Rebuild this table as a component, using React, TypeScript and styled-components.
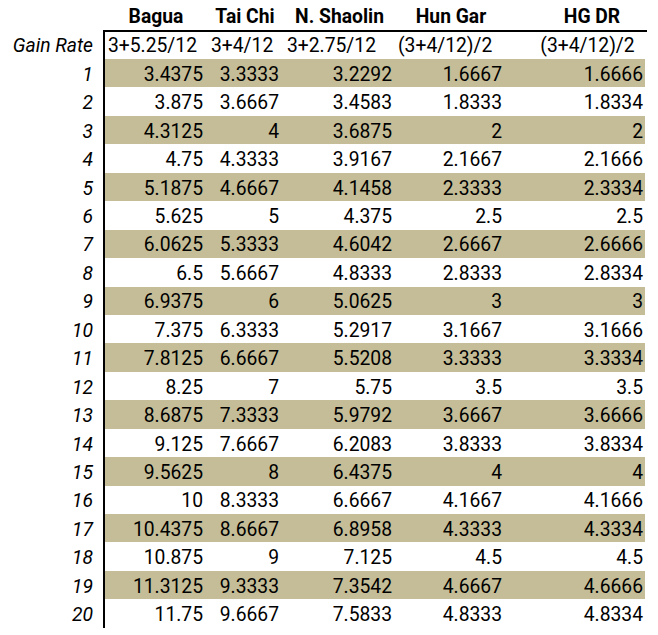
import React from 'react';
import styled, { createGlobalStyle } from 'styled-components';

const GlobalStyle = createGlobalStyle`
  *, *::before, *::after { box-sizing: border-box; }
  html, body { margin: 0; padding: 0; background: #ffffff; }
  body { font-family: Roboto, "Liberation Sans", sans-serif; color: #000000; }
`;

type Align = 'left' | 'right' | 'center';

const COLUMNS = '102px 76px 113px 110px 139px';

const Sheet = styled.div`
  display: flex;
  flex-direction: column;
  width: 647px;
  font-size: 19.3px;
`;

const Row = styled.div<{ $h: number }>`
  display: grid;
  grid-template-columns: 103px 544px;
  height: ${(p) => p.$h}px;
`;

const Label = styled.div`
  display: flex;
  align-items: flex-end;
  justify-content: flex-end;
  padding: 0 10px 1.6px 0;
  font-style: italic;
  line-height: 22px;
  white-space: nowrap;
`;

const DataRow = styled.div<{ $shaded?: boolean; $ruled?: boolean; $bare?: boolean }>`
  display: grid;
  grid-template-columns: ${COLUMNS};
  border-left: 2px solid ${(p) => (p.$bare ? 'transparent' : '#000000')};
  border-top: ${(p) => (p.$ruled ? '2px solid #000000' : 'none')};
  padding-right: 2px;
  background: ${(p) => (p.$shaded ? '#c4bd97' : 'transparent')};
  background-clip: content-box;
`;

const justify = { left: 'flex-start', right: 'flex-end', center: 'center' } as const;

const Cell = styled.div<{ $align: Align; $padL?: number; $padR?: number; $bold?: boolean }>`
  display: flex;
  align-items: flex-end;
  justify-content: ${(p) => justify[p.$align]};
  padding: 0 ${(p) => p.$padR ?? 0}px 1.6px ${(p) => p.$padL ?? 0}px;
  line-height: 22px;
  white-space: nowrap;
  font-weight: ${(p) => (p.$bold ? 700 : 400)};
`;

const headers: { text: string; padL?: number }[] = [
  { text: 'Bagua' },
  { text: 'Tai Chi' },
  { text: 'N. Shaolin' },
  { text: 'Hun Gar' },
  { text: 'HG DR', padL: 33 },
];

const formulas: { text: string; align: Align; padL: number }[] = [
  { text: '3+5.25/12', align: 'left', padL: 3 },
  { text: '3+4/12', align: 'left', padL: 4 },
  { text: '3+2.75/12', align: 'left', padL: 4 },
  { text: '(3+4/12)/2', align: 'left', padL: 2 },
  { text: '(3+4/12)/2', align: 'center', padL: 24 },
];

const rows: string[][] = [
  ['3.4375', '3.3333', '3.2292', '1.6667', '1.6666'],
  ['3.875', '3.6667', '3.4583', '1.8333', '1.8334'],
  ['4.3125', '4', '3.6875', '2', '2'],
  ['4.75', '4.3333', '3.9167', '2.1667', '2.1666'],
  ['5.1875', '4.6667', '4.1458', '2.3333', '2.3334'],
  ['5.625', '5', '4.375', '2.5', '2.5'],
  ['6.0625', '5.3333', '4.6042', '2.6667', '2.6666'],
  ['6.5', '5.6667', '4.8333', '2.8333', '2.8334'],
  ['6.9375', '6', '5.0625', '3', '3'],
  ['7.375', '6.3333', '5.2917', '3.1667', '3.1666'],
  ['7.8125', '6.6667', '5.5208', '3.3333', '3.3334'],
  ['8.25', '7', '5.75', '3.5', '3.5'],
  ['8.6875', '7.3333', '5.9792', '3.6667', '3.6666'],
  ['9.125', '7.6667', '6.2083', '3.8333', '3.8334'],
  ['9.5625', '8', '6.4375', '4', '4'],
  ['10', '8.3333', '6.6667', '4.1667', '4.1666'],
  ['10.4375', '8.6667', '6.8958', '4.3333', '4.3334'],
  ['10.875', '9', '7.125', '4.5', '4.5'],
  ['11.3125', '9.3333', '7.3542', '4.6667', '4.6666'],
  ['11.75', '9.6667', '7.5833', '4.8333', '4.8334'],
];

const numberPadR = [4, 4, 4, 4, 2];

export default function App() {
  return (
    <>
      <GlobalStyle />
      <Sheet>
        <Row $h={30}>
          <Label />
          <DataRow $bare>
            {headers.map((h) => (
              <Cell key={h.text} $align="center" $padL={h.padL} $bold>
                {h.text}
              </Cell>
            ))}
          </DataRow>
        </Row>
        <Row $h={29}>
          <Label>Gain Rate</Label>
          <DataRow $ruled>
            {formulas.map((f, i) => (
              <Cell key={i} $align={f.align} $padL={f.padL}>
                {f.text}
              </Cell>
            ))}
          </DataRow>
        </Row>
        {rows.map((r, i) => (
          <Row key={i} $h={28.44}>
            <Label>{i + 1}</Label>
            <DataRow $shaded={i % 2 === 0}>
              {r.map((v, j) => (
                <Cell key={j} $align="right" $padR={numberPadR[j]}>
                  {v}
                </Cell>
              ))}
            </DataRow>
          </Row>
        ))}
      </Sheet>
    </>
  );
}
